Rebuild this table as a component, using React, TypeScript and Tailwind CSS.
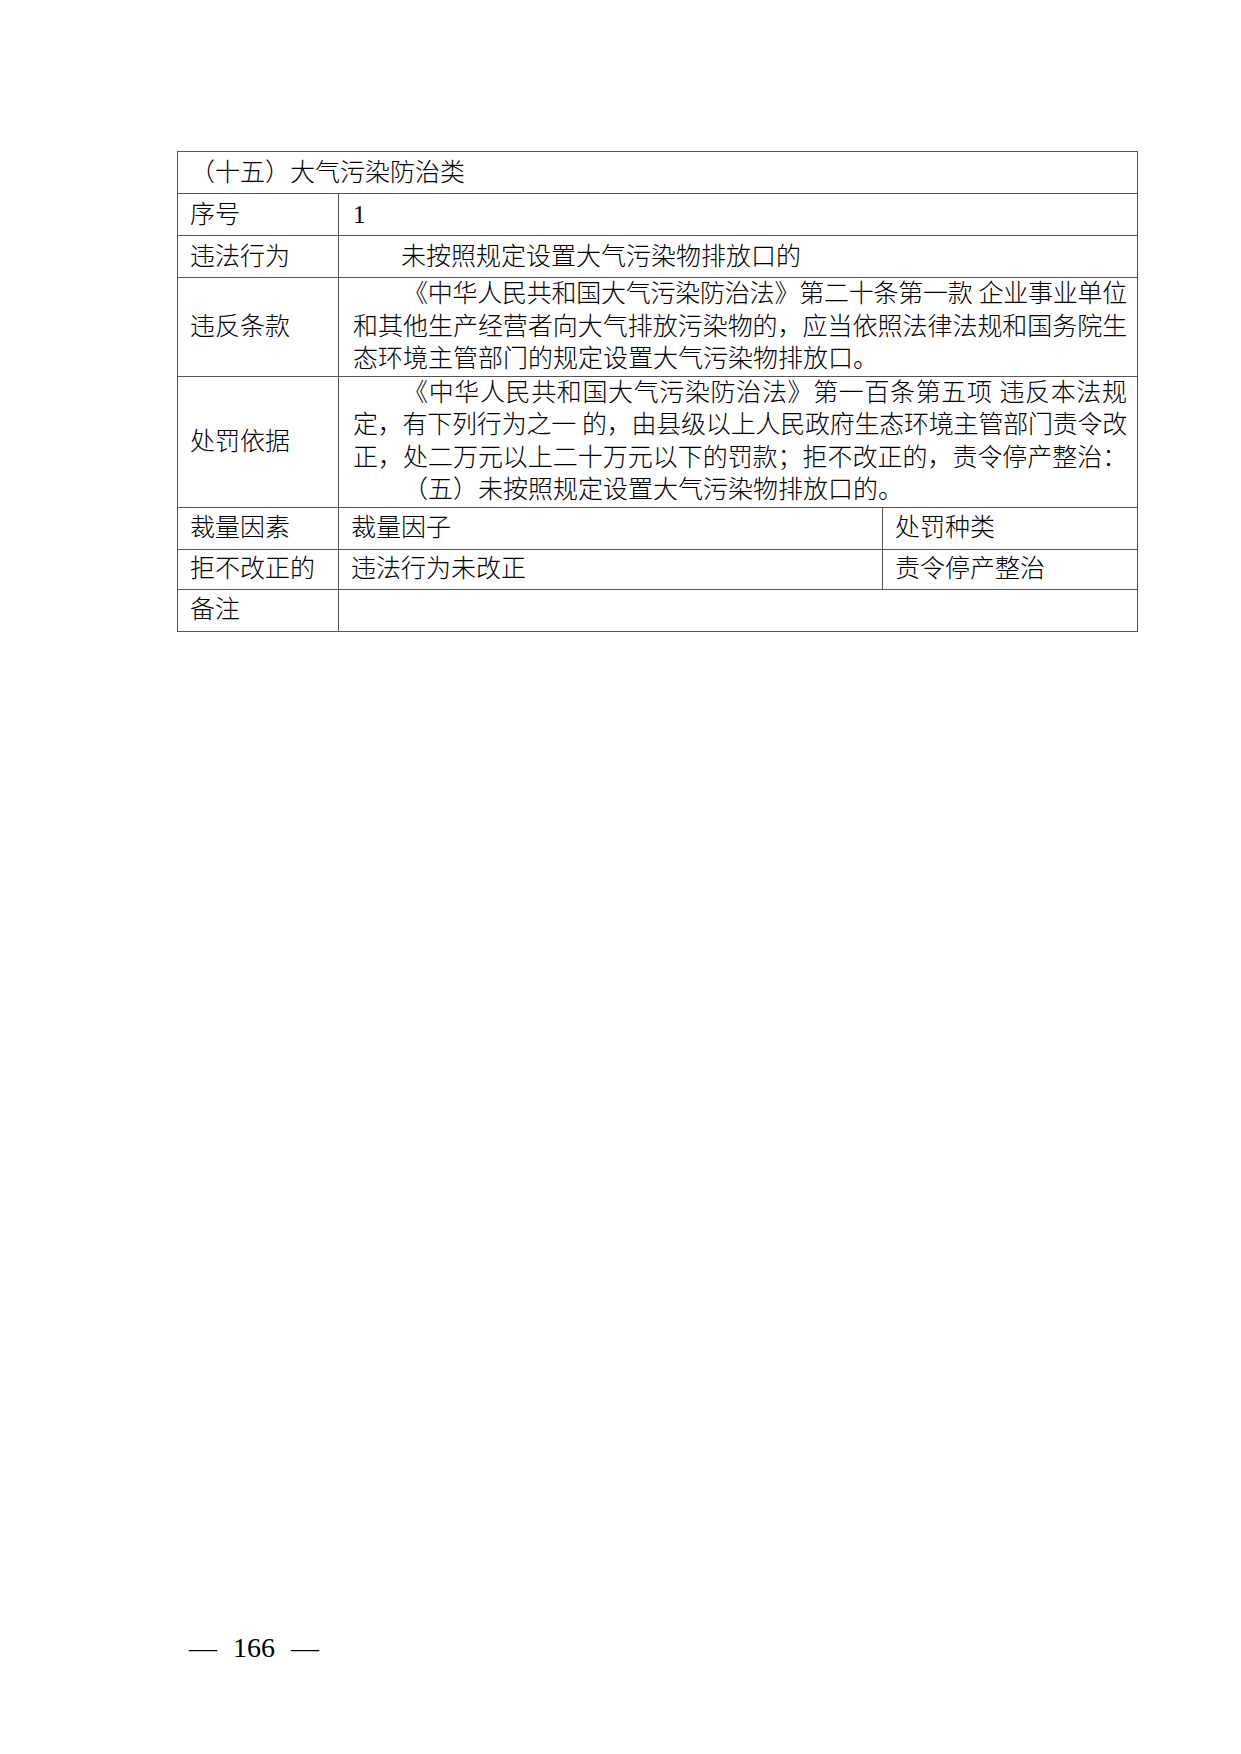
const font = { fontFamily: '"Liberation Serif", "Noto Sans CJK SC", serif' };

const Line = ({ children, indent = false, full = false, tight = false, h = "h-[33px] leading-[33px]" }: { children: React.ReactNode; indent?: boolean; full?: boolean; tight?: boolean; h?: string }) => (
  <div
    className={`${h} whitespace-nowrap ${indent ? "pl-[50px]" : ""} ${full ? "text-justify [text-align-last:justify]" : ""} ${tight ? "tracking-[-0.25px]" : ""}`}
  >
    {children}
  </div>
);

const cell = "border border-[#555] px-[12px] align-middle";
const lh = "h-[32.5px] leading-[32.5px]";

export default function App() {
  return (
    <div className="w-[1241px] h-[1754px] bg-white text-black flex flex-col text-[25px] font-light" style={font}>
      <div className="pt-[151px] pl-[177px]">
        <table className="w-[960px] border-collapse border border-black table-fixed">
          <colgroup>
            <col className="w-[161px]" />
            <col className="w-[544px]" />
            <col className="w-[255px]" />
          </colgroup>
          <tbody>
            <tr className="h-[42px]">
              <td colSpan={3} className={cell}>（十五）大气污染防治类</td>
            </tr>
            <tr className="h-[42px]">
              <td className={cell}>序号</td>
              <td colSpan={2} className={`${cell} pl-[14px]`}>1</td>
            </tr>
            <tr className="h-[42px]">
              <td className={cell}>违法行为</td>
              <td colSpan={2} className={`${cell} pl-[14px]`}>
                <span className="pl-[48px]">未按照规定设置大气污染物排放口的</span>
              </td>
            </tr>
            <tr className="h-[98px]">
              <td className={cell}>违反条款</td>
              <td colSpan={2} className={`${cell} pl-[14px] pr-[10px]`}>
                <Line h={lh} indent full tight>《中华人民共和国大气污染防治法》第二十条第一款 企业事业单位</Line>
                <Line h={lh} full tight>和其他生产经营者向大气排放污染物的，应当依照法律法规和国务院生</Line>
                <Line h={lh}>态环境主管部门的规定设置大气污染物排放口。</Line>
              </td>
            </tr>
            <tr className="h-[131px]">
              <td className={cell}>处罚依据</td>
              <td colSpan={2} className={`${cell} pl-[14px] pr-[10px]`}>
                <Line h={lh} indent full>《中华人民共和国大气污染防治法》第一百条第五项 违反本法规</Line>
                <Line h={lh} full tight>定，有下列行为之一 的，由县级以上人民政府生态环境主管部门责令改</Line>
                <Line h={lh} full tight>正，处二万元以上二十万元以下的罚款；拒不改正的，责令停产整治：</Line>
                <Line h={lh} indent>（五）未按照规定设置大气污染物排放口的。</Line>
              </td>
            </tr>
            <tr className="h-[42px]">
              <td className={cell}>裁量因素</td>
              <td className={cell}>裁量因子</td>
              <td className={cell}>处罚种类</td>
            </tr>
            <tr className="h-[40px]">
              <td className={`${cell} whitespace-nowrap`}>拒不改正的</td>
              <td className={cell}>违法行为未改正</td>
              <td className={cell}>责令停产整治</td>
            </tr>
            <tr className="h-[42px]">
              <td className={cell}>备注</td>
              <td colSpan={2} className={cell}></td>
            </tr>
          </tbody>
        </table>
      </div>
      <div className="flex-1" />
      <div className="mb-[86px] h-[40px] pl-[189px] flex items-center gap-[16px] text-[28px] leading-none font-normal" style={{ fontFamily: '"Liberation Serif", serif' }}>
        <span>—</span>
        <span>166</span>
        <span>—</span>
      </div>
    </div>
  );
}
